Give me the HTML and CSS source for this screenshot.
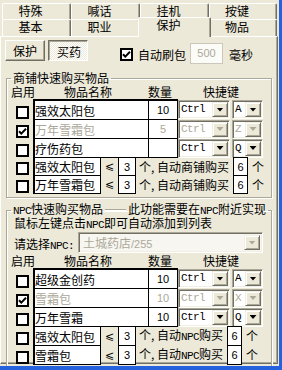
FILE: index.html
```html
<!DOCTYPE html>
<html lang="zh-CN">
<head>
    <meta charset="UTF-8">
    <meta name="viewport" content="width=device-width, initial-scale=1.0">
    <title>保护 - 买药</title>
    <link rel="stylesheet" href="styles.css">
</head>
<body>
<div class="window">
  <div class="dialog">
    <!-- 两行选项卡 -->
    <div class="tab-row">
      <div class="tab">特殊</div>
      <div class="tab">喊话</div>
      <div class="tab">挂机</div>
      <div class="tab last">按键</div>
    </div>
    <div class="tab-row second">
      <div class="tab">基本</div>
      <div class="tab">职业</div>
      <div class="tab active">保护</div>
      <div class="tab last">物品</div>
    </div>

    <div class="panel">
      <div class="toolbar">
        <button class="btn">保护</button>
        <button class="btn pressed">买药</button>
        <span class="chk top-chk"><svg width="9" height="9" viewBox="0 0 9 9"><path d="M1 4.2l2.3 2.4L8 1.8" fill="none" stroke="#000" stroke-width="2"/></svg></span>
        <span class="lbl">自动刷包</span>
        <span class="edit num">500</span>
        <span class="lbl unit">毫秒</span>
      </div>

      <!-- 商铺购买 -->
      <fieldset class="group shop">
        <legend>商铺快速购买物品</legend>
        <div class="head">
          <span class="h-use">启用</span>
          <span class="h-name">物品名称</span>
          <span class="h-qty">数量</span>
          <span>快捷键</span>
        </div>
        <div class="rows">
          <div class="row">
            <span class="cb"><i class="chk"></i></span>
            <span class="cell name">强效太阳包</span>
            <span class="cell qty num">10</span>
            <span class="combo mod"><span class="val en">Ctrl</span><span class="drop"><i></i></span></span>
            <span class="combo key"><span class="val en">A</span><span class="drop"><i></i></span></span>
          </div>
          <div class="row off">
            <span class="cb"><i class="chk"><svg width="9" height="9" viewBox="0 0 9 9"><path d="M1 4.2l2.3 2.4L8 1.8" fill="none" stroke="#000" stroke-width="2"/></svg></i></span>
            <span class="cell name">万年雪霜包</span>
            <span class="cell qty num">5</span>
            <span class="combo mod"><span class="val en">Ctrl</span><span class="drop"><i></i></span></span>
            <span class="combo key"><span class="val en">Z</span><span class="drop"><i></i></span></span>
          </div>
          <div class="row">
            <span class="cb"><i class="chk"></i></span>
            <span class="cell name">疗伤药包</span>
            <span class="cell qty num"></span>
            <span class="combo mod"><span class="val en">Ctrl</span><span class="drop"><i></i></span></span>
            <span class="combo key"><span class="val en">Q</span><span class="drop"><i></i></span></span>
          </div>
          <div class="row auto">
            <span class="cb"><i class="chk"></i></span>
            <span class="cell name short">强效太阳包</span>
            <span class="le">⩽</span>
            <span class="cell box3 num">3</span>
            <span class="txt">个, 自动商铺购买</span>
            <span class="cell box6 num">6</span>
            <span class="txt unit">个</span>
          </div>
          <div class="row auto">
            <span class="cb"><i class="chk"></i></span>
            <span class="cell name short">万年雪霜包</span>
            <span class="le">⩽</span>
            <span class="cell box3 num">3</span>
            <span class="txt">个, 自动商铺购买</span>
            <span class="cell box6 num">6</span>
            <span class="txt unit">个</span>
          </div>
        </div>
      </fieldset>

      <!-- NPC购买 -->
      <fieldset class="group npc">
        <legend><span><span class="en">NPC</span>快速购买物品</span><span class="rule"></span><span>此功能需要在<span class="en">NPC</span>附近实现</span></legend>
        <div class="info">鼠标左键点击<span class="en">NPC</span>即可自动添加到列表</div>
        <div class="pick">
          <span class="pick-lbl">请选择<span class="en">NPC:</span></span>
          <span class="combo select off"><span class="val">土城药店<span class="num">/255</span></span><span class="drop"><i></i></span></span>
        </div>
        <div class="head">
          <span class="h-use">启用</span>
          <span class="h-name">物品名称</span>
          <span class="h-qty">数量</span>
          <span>快捷键</span>
        </div>
        <div class="rows">
          <div class="row">
            <span class="cb"><i class="chk"></i></span>
            <span class="cell name">超级金创药</span>
            <span class="cell qty num">10</span>
            <span class="combo mod"><span class="val en">Ctrl</span><span class="drop"><i></i></span></span>
            <span class="combo key"><span class="val en">A</span><span class="drop"><i></i></span></span>
          </div>
          <div class="row off">
            <span class="cb"><i class="chk"><svg width="9" height="9" viewBox="0 0 9 9"><path d="M1 4.2l2.3 2.4L8 1.8" fill="none" stroke="#000" stroke-width="2"/></svg></i></span>
            <span class="cell name">雪霜包</span>
            <span class="cell qty num">10</span>
            <span class="combo mod"><span class="val en">Ctrl</span><span class="drop"><i></i></span></span>
            <span class="combo key"><span class="val en">X</span><span class="drop"><i></i></span></span>
          </div>
          <div class="row">
            <span class="cb"><i class="chk"></i></span>
            <span class="cell name">万年雪霜</span>
            <span class="cell qty num">10</span>
            <span class="combo mod"><span class="val en">Ctrl</span><span class="drop"><i></i></span></span>
            <span class="combo key"><span class="val en">Q</span><span class="drop"><i></i></span></span>
          </div>
          <div class="row auto tall">
            <span class="cb"><i class="chk"></i></span>
            <span class="cell name short">强效太阳包</span>
            <span class="le">⩽</span>
            <span class="cell box3 num">3</span>
            <span class="txt">个, 自动<span class="en">NPC</span>购买</span>
            <span class="cell box6 num">6</span>
            <span class="txt unit">个</span>
          </div>
          <div class="row auto tall">
            <span class="cb"><i class="chk"></i></span>
            <span class="cell name short">雪霜包</span>
            <span class="le">⩽</span>
            <span class="cell box3 num">3</span>
            <span class="txt">个, 自动<span class="en">NPC</span>购买</span>
            <span class="cell box6 num">6</span>
            <span class="txt unit">个</span>
          </div>
        </div>
      </fieldset>
    </div>
  </div>
</div>
</body>
</html>
```

FILE: styles.css
```css
* {
    box-sizing: border-box;
}
body {
    margin: 0;
    font-family: "Noto Sans CJK SC", sans-serif;
    font-size: 12px;
    color: #000;
}
.window {
    width: 282px;
    height: 370px;
    background: #2762de;
    padding: 0 3px 4px 0;
}
.dialog {
    width: 279px;
    height: 366px;
    background: #ece9d8;
    padding-top: 3px;
    overflow: hidden;
}

/* tabs */
.tab-row {
    display: flex;
    height: 16px;
    margin-left: 2px;
}
.tab-row.second {
    height: 17px;
}
.tab {
    width: 69px;
    padding-right: 12px;
    text-align: center;
    line-height: 14px;
    background: #ece9d8;
    border-top: 1px solid #fff;
    border-left: 1px solid #fff;
    border-right: 1px solid #716f64;
    box-shadow: inset -1px 0 #aca899;
    border-radius: 2px 2px 0 0;
}
.tab.last {
    width: 68px;
}
.tab.active {
    position: relative;
    z-index: 1;
    width: 73px;
    height: 20px;
    margin: -2px -2px 0 -2px;
}

.panel {
    width: 278px;
    height: 328px;
    border: 1px solid;
    border-color: #fff #716f64 #716f64 #fff;
    box-shadow: inset -1px -1px #aca899;
}

/* toolbar */
.toolbar {
    display: flex;
    align-items: flex-start;
    height: 27px;
    padding: 3px 0 0 4px;
}
.btn {
    width: 40px;
    height: 21px;
    padding: 0;
    font-family: inherit;
    font-size: 12px;
    line-height: 17px;
    color: #000;
    background: #ece9d8;
    border: 1px solid;
    border-color: #fff #716f64 #716f64 #fff;
    box-shadow: inset -1px -1px #aca899;
}
.btn.pressed {
    margin-left: 3px;
    padding: 1px 0 0 2px;
    border-color: #716f64 #fff #fff #716f64;
    box-shadow: inset 1px 1px #aca899;
    background: repeating-conic-gradient(#fff 0 25%, #ece9d8 0 50%) 0 0 / 2px 2px;
}
.chk {
    display: flex;
    align-items: center;
    justify-content: center;
    width: 13px;
    height: 13px;
    background: #fff;
    border: 2px solid #000;
}
.top-chk {
    margin: 8px 0 0 32px;
}
.lbl {
    margin: 8px 0 0 5px;
    line-height: 14px;
}
.lbl.unit {
    margin-left: 6px;
}
.edit {
    width: 33px;
    height: 21px;
    margin: 3px 0 0 4px;
    line-height: 19px;
    text-align: center;
    color: #aca899;
    background: #fbfbf8;
    border: 1px solid #cbc8bb;
}
.num {
    font-family: "Liberation Sans", Arial, sans-serif;
    font-size: 11px;
}
.en {
    font-family: "Liberation Mono", monospace;
    font-size: 11px;
    letter-spacing: -0.6px;
}

/* group boxes */
.group {
    margin: 8px 0 0 5px;
    width: 266px;
    min-width: 0;
    padding: 0 0 3px 0;
    border: 1px solid #aca899;
    box-shadow: inset 1px 1px #fff, 1px 1px #fff;
}
.group legend {
    display: flex;
    margin-left: 4px;
    padding: 0 2px;
    line-height: 12px;
}
.group.npc {
    margin-top: 5px;
    padding-bottom: 1px;
}
.rule {
    align-self: center;
    width: 21px;
    height: 2px;
    margin: 0 2px;
    border-top: 1px solid #aca899;
    border-bottom: 1px solid #fff;
}
.head {
    display: flex;
    height: 15px;
    line-height: 15px;
}
.h-use {
    width: 57px;
    padding-left: 4px;
}
.h-name {
    width: 84px;
}
.h-qty {
    width: 55px;
}
.info {
    padding-left: 7px;
    line-height: 12px;
}
.pick {
    display: flex;
    height: 21px;
    margin-top: 1px;
}
.pick-lbl {
    align-self: flex-end;
    padding-left: 7px;
    line-height: 14px;
}

/* rows */
.row {
    display: flex;
    height: 20px;
    margin-top: -1px;
}
.row:first-child {
    height: 21px;
    margin-top: 0;
}
.row.auto {
    height: 19px;
}
.row.auto.tall {
    height: 20px;
}
.cb {
    display: flex;
    align-items: flex-end;
    width: 26px;
    padding: 0 0 1px 9px;
}
.cell {
    display: flex;
    align-items: center;
    background: #fff;
    border: 1px solid #000;
}
.row:first-child .cell {
    border-top-width: 2px;
}
.name {
    width: 116px;
    border-left-width: 2px;
}
.name.short {
    width: 68px;
}
.qty {
    width: 30px;
    margin-left: -1px;
    justify-content: center;
}
.row.off .cell {
    color: #aca899;
}
.le {
    display: flex;
    align-items: center;
    justify-content: center;
    width: 17px;
    font-family: "DejaVu Sans", sans-serif;
    font-size: 11px;
}
.box3 {
    width: 18px;
    justify-content: center;
}
.box6 {
    width: 15px;
    margin-left: 4px;
    justify-content: center;
}
.txt {
    align-self: center;
    margin-left: 3px;
    line-height: 14px;
    white-space: nowrap;
}
.txt.unit {
    margin-left: 4px;
}

/* combo boxes */
.combo {
    display: flex;
    align-self: center;
    height: 19px;
    padding: 1px;
    background: #fff;
    border: 1px solid;
    border-color: #aca899 #fff #fff #aca899;
    box-shadow: inset 1px 1px #716f64, inset -1px -1px #f1efe2;
}
.combo .val {
    flex: 1;
    padding-left: 1px;
    line-height: 15px;
    white-space: nowrap;
    overflow: hidden;
}
.mod {
    width: 52px;
}
.key {
    width: 31px;
    margin-left: 2px;
}
.select {
    width: 185px;
    height: 21px;
    margin-left: 4px;
    padding: 2px;
    background: #f7f6f1;
}
.select .val {
    padding-left: 2px;
}
.drop {
    display: flex;
    align-items: center;
    justify-content: center;
    width: 16px;
    background: #ece9d8;
    border: 1px solid;
    border-color: #f1efe2 #716f64 #716f64 #f1efe2;
    box-shadow: inset 1px 1px #fff, inset -1px -1px #aca899;
}
.drop i {
    width: 7px;
    height: 4px;
    background: #000;
    clip-path: polygon(0 0, 100% 0, 50% 100%);
}
.row.off .combo,
.combo.off {
    color: #aca899;
}
.row.off .drop i,
.combo.off .drop i {
    background: #aca899;
}
```
